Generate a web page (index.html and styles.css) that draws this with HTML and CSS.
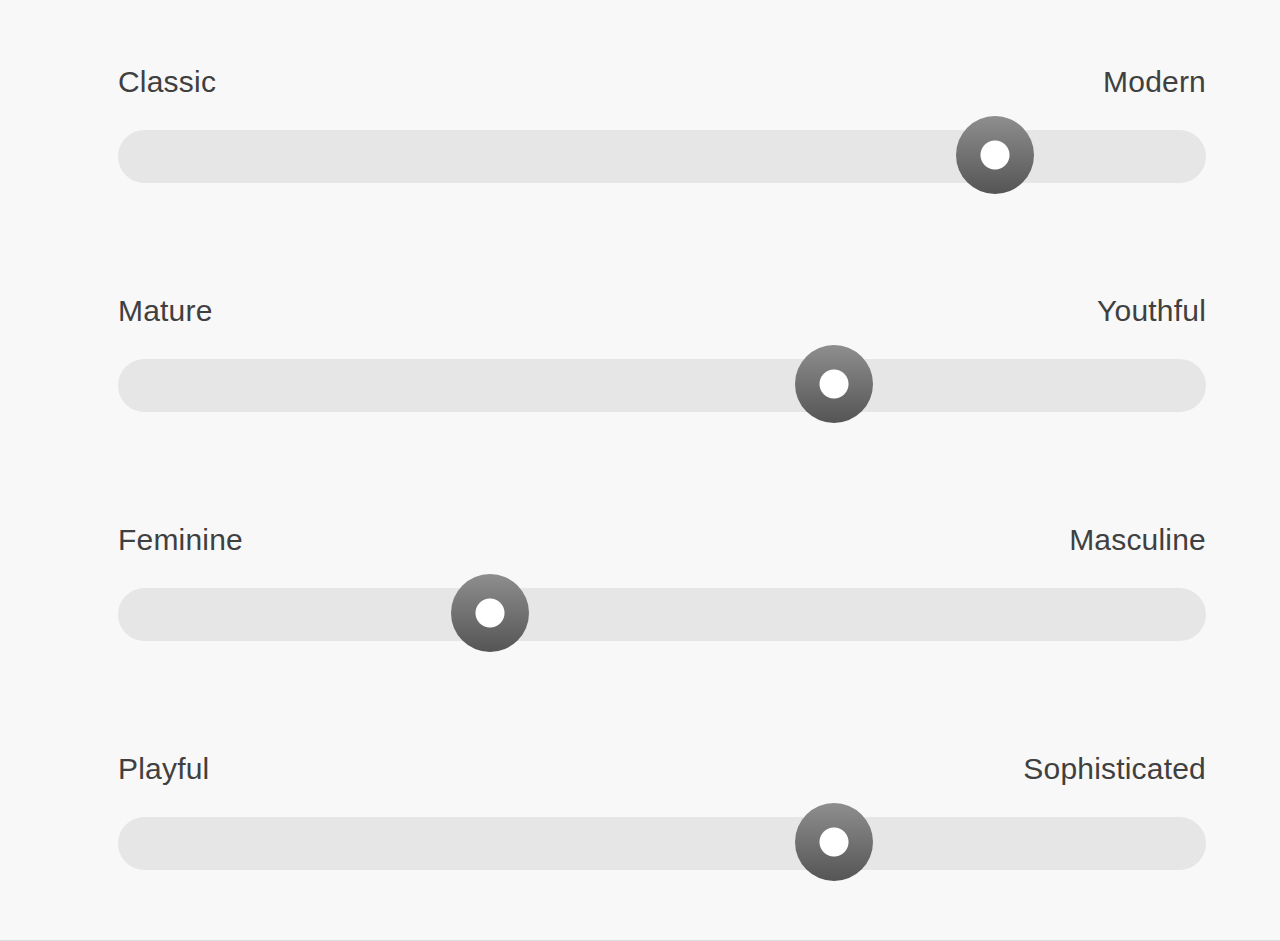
FILE: index.html
```html
<!DOCTYPE html>
<html lang="en">

<head>
    <meta charset="UTF-8">
    <meta name="viewport" content="width=device-width, initial-scale=1.0">
    <title>Brand Personality</title>
    <link rel="stylesheet" href="styles.css">
</head>

<body>
    <div class="page">
        <div class="scale">
            <div class="labels">
                <p>Classic</p>
                <p>Modern</p>
            </div>
            <input type="range" class="slider" min="0" max="100" value="83">
        </div>

        <div class="scale">
            <div class="labels">
                <p>Mature</p>
                <p>Youthful</p>
            </div>
            <input type="range" class="slider" min="0" max="100" value="67">
        </div>

        <div class="scale">
            <div class="labels">
                <p>Feminine</p>
                <p>Masculine</p>
            </div>
            <input type="range" class="slider" min="0" max="100" value="33">
        </div>

        <div class="scale">
            <div class="labels">
                <p>Playful</p>
                <p>Sophisticated</p>
            </div>
            <input type="range" class="slider" min="0" max="100" value="67">
        </div>
    </div>
</body>

</html>
```

FILE: styles.css
```css
* {
    margin: 0;
    padding: 0;
    box-sizing: border-box;
}

body {
    background-color: #f8f8f8;
    font-family: "Liberation Sans", Arial, sans-serif;
    color: #404040;
}

.page {
    height: 941px;
    padding: 64px 74px 0 118px;
    border-bottom: 1px solid #dedede;
}

.scale {
    margin-bottom: 110px;
}

.labels {
    display: flex;
    justify-content: space-between;
    font-size: 30px;
    line-height: 36px;
    letter-spacing: 0.2px;
    margin-bottom: 30px;
}

.slider {
    -webkit-appearance: none;
    appearance: none;
    display: block;
    width: 100%;
    height: 53px;
    margin: 0;
    background: transparent;
    outline: 0;
}

.slider::-webkit-slider-runnable-track {
    height: 53px;
    border-radius: 27px;
    background: #e6e6e6;
}

.slider::-webkit-slider-thumb {
    -webkit-appearance: none;
    width: 78px;
    height: 78px;
    margin-top: -14px;
    border-radius: 50%;
    border: 0;
    background:
        radial-gradient(circle, #fff 14px, rgba(255, 255, 255, 0) 15px),
        linear-gradient(#8e8e8e, #555);
    cursor: pointer;
}
```
